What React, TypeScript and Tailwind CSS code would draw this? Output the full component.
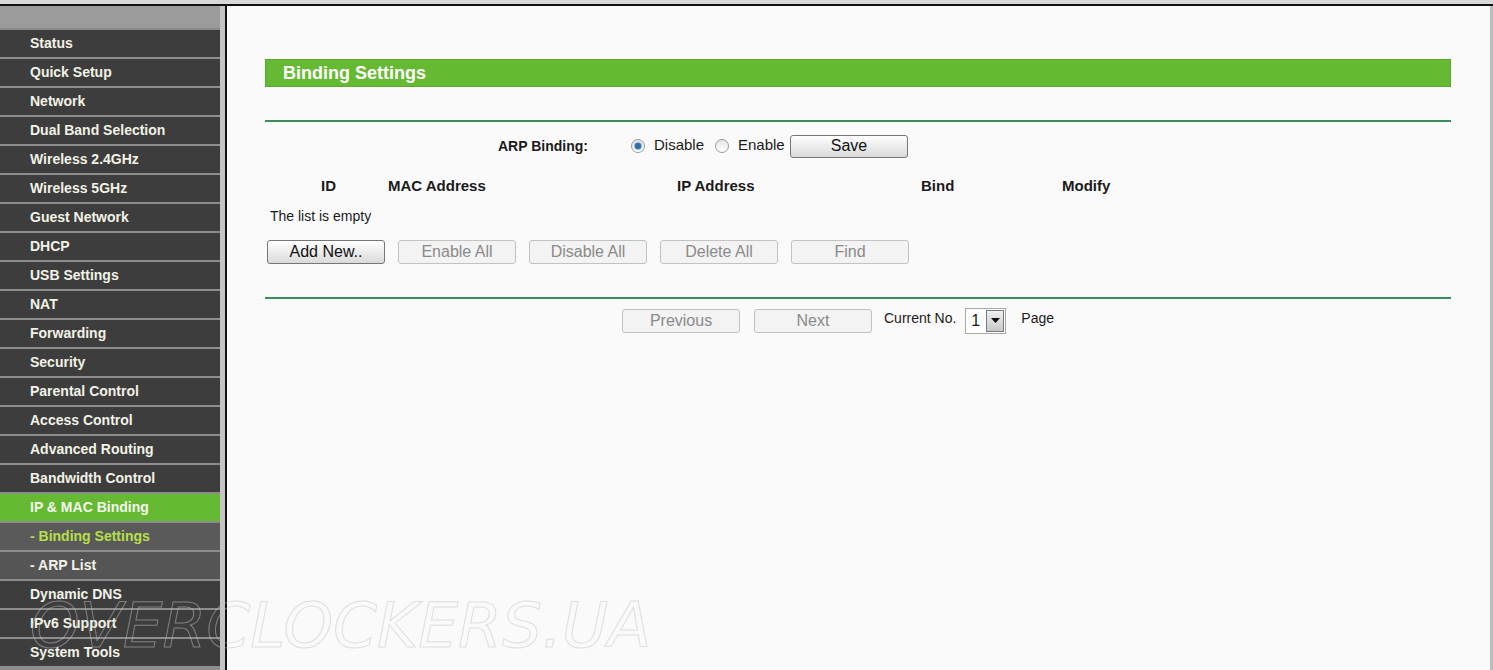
const menu = [
  { label: 'Status' },
  { label: 'Quick Setup' },
  { label: 'Network' },
  { label: 'Dual Band Selection' },
  { label: 'Wireless 2.4GHz' },
  { label: 'Wireless 5GHz' },
  { label: 'Guest Network' },
  { label: 'DHCP' },
  { label: 'USB Settings' },
  { label: 'NAT' },
  { label: 'Forwarding' },
  { label: 'Security' },
  { label: 'Parental Control' },
  { label: 'Access Control' },
  { label: 'Advanced Routing' },
  { label: 'Bandwidth Control' },
  { label: 'IP & MAC Binding', kind: 'active' },
  { label: '- Binding Settings', kind: 'subActive' },
  { label: '- ARP List', kind: 'sub' },
  { label: 'Dynamic DNS' },
  { label: 'IPv6 Support' },
  { label: 'System Tools' },
];

function Radio({ checked }: { checked?: boolean }) {
  return (
    <span className="w-[14px] h-[14px] shrink-0 rounded-full border border-[#9a9a9a] bg-gradient-to-b from-[#e4e4e4] to-white flex items-center justify-center">
      {checked && <span className="w-[6px] h-[6px] rounded-full bg-[#2f6fa8] ring-1 ring-[#8fb6d8]" />}
    </span>
  );
}

function Btn({ label, disabled }: { label: string; disabled?: boolean }) {
  return (
    <button
      className={
        disabled
          ? 'w-[118px] h-[24px] rounded-[3px] border border-[#c2c2c2] bg-[#f3f3f3] text-[#8a8a8a] text-[16px] leading-none'
          : 'w-[118px] h-[24px] rounded-[3px] border border-[#767676] bg-gradient-to-b from-white to-[#dadada] text-[#111] text-[16px] leading-none'
      }
    >
      {label}
    </button>
  );
}

export default function App() {
  return (
    <div className="w-[1493px] h-[670px] overflow-hidden bg-[#fafafa] font-['Liberation_Sans',Arial,sans-serif] flex flex-col relative">
      {/* top strip */}
      <div className="h-[6px] bg-[#d8d8d8] border-b-2 border-[#111] shrink-0" />

      <div className="flex flex-1 min-h-0">
        {/* sidebar */}
        <div className="w-[220px] shrink-0 flex flex-col bg-[#8c8c8c]">
          <div className="h-[24px] bg-[#9b9b9b] border-b-2 border-[#8a8a8a] shrink-0" />
          {menu.map(({ label, kind }) => (
            <div
              key={label}
              className={
                'h-[29px] shrink-0 border-b-2 border-[#8d8d8d] pl-[30px] flex items-center text-[14px] font-bold ' +
                (kind === 'active'
                  ? 'bg-[#66b933] text-[#f4f8ec]'
                  : kind === 'subActive'
                  ? 'bg-[#5a5a5a] text-[#b6e04a]'
                  : kind === 'sub'
                  ? 'bg-[#555555] text-[#f2f2e8]'
                  : 'bg-[#3d3d3d] text-[#f2f2e6]')
              }
            >
              {label}
            </div>
          ))}
        </div>
        <div className="w-[5px] shrink-0 bg-[#c4c4c4]" />
        <div className="w-[2px] shrink-0 bg-[#111]" />

        {/* content */}
        <div className="flex-1 min-w-0 border-r-[3px] border-[#bdbdbd] pt-[53px] pl-[38px] pr-[39px] text-[#1a1a1a]">
          <div className="h-[28px] bg-[#66b933] border border-[#5aa82d] pl-[17px] flex items-center text-white text-[18px] font-bold">
            Binding Settings
          </div>

          <div className="mt-[33px] h-[2px] bg-[#3b8e5c]" />

          <div className="mt-[12px] flex items-center h-[24px] pl-[233px] text-[15px]">
            <span className="w-[133px] text-[14px] font-bold">ARP Binding:</span>
            <Radio checked />
            <span className="ml-[9px] w-[51px] mb-[2px]">Disable</span>
            <span className="ml-[10px] flex">
              <Radio />
            </span>
            <span className="ml-[9px] w-[46px] mb-[2px]">Enable</span>
            <button className="ml-[6px] w-[118px] h-[23px] rounded-[3px] border border-[#767676] bg-gradient-to-b from-white to-[#dadada] text-[16px] text-[#111] leading-none">
              Save
            </button>
          </div>

          <div className="mt-[17px] flex text-[15px] font-bold pl-[56px]">
            <span className="w-[67px]">ID</span>
            <span className="w-[289px]">MAC Address</span>
            <span className="w-[244px]">IP Address</span>
            <span className="w-[141px]">Bind</span>
            <span>Modify</span>
          </div>

          <div className="mt-[8px] pl-[5px] text-[14px]">The list is empty</div>

          <div className="mt-[13px] pl-[2px] flex gap-[13px]">
            <Btn label="Add New.." />
            <Btn label="Enable All" disabled />
            <Btn label="Disable All" disabled />
            <Btn label="Delete All" disabled />
            <Btn label="Find" disabled />
          </div>

          <div className="mt-[33px] h-[2px] bg-[#3b8e5c]" />

          <div className="mt-[9px] flex items-center pl-[357px] text-[14px]">
            <Btn label="Previous" disabled />
            <span className="ml-[14px] flex">
              <Btn label="Next" disabled />
            </span>
            <span className="ml-[12px] mb-[4px]">Current No.</span>
            <span className="ml-[9px] h-[26px] w-[41px] border border-[#a8a8a8] bg-white flex items-center">
              <span className="flex-1 pl-[5px] text-[16px]">1</span>
              <span className="w-[18px] h-[22px] mr-[1px] border border-[#7a7a7a] bg-gradient-to-b from-[#f0f0f0] to-[#c8c8c8] flex items-center justify-center">
                <svg width="9" height="5" viewBox="0 0 9 5">
                  <path d="M0 0h9L4.5 5z" fill="#111" />
                </svg>
              </span>
            </span>
            <span className="ml-[15px] mb-[4px]">Page</span>
          </div>
        </div>
      </div>

      {/* watermark */}
      <div className="absolute left-[30px] top-[594px] text-[63px] leading-none italic text-transparent [-webkit-text-stroke:1px_rgba(195,195,195,0.5)] pointer-events-none select-none font-['DejaVu_Sans',sans-serif]">
        OVERCLOCKERS.UA
      </div>
    </div>
  );
}
